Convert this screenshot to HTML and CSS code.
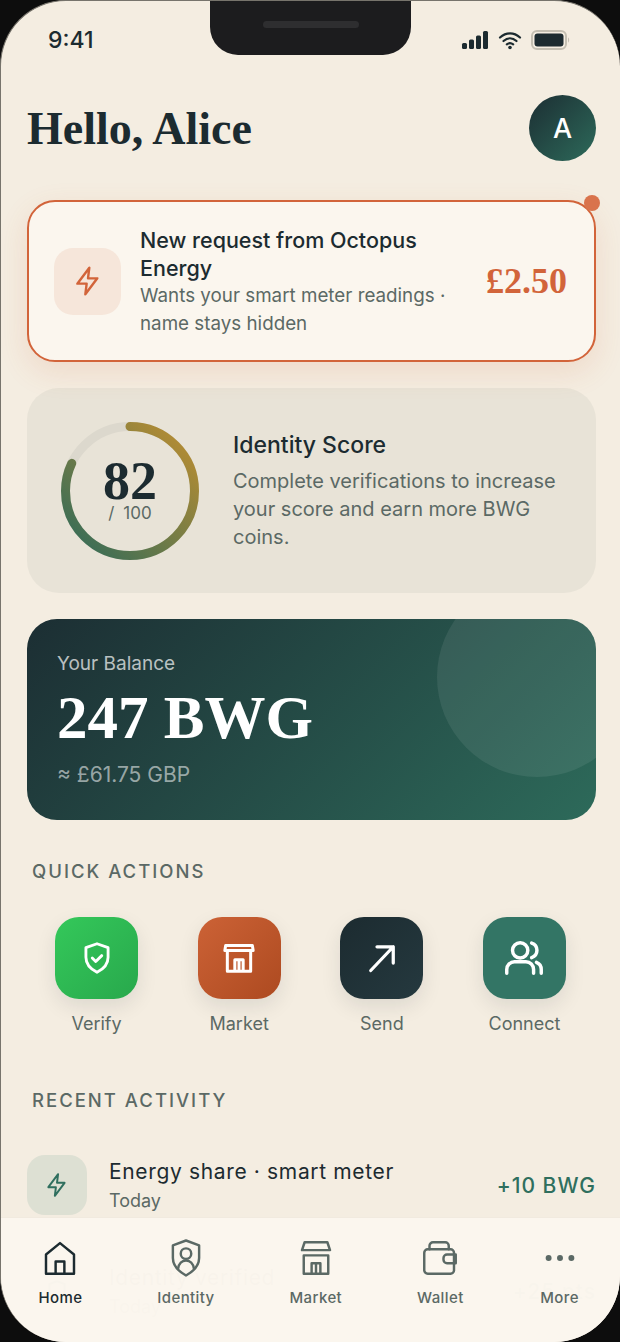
FILE: index.html
```html
<!DOCTYPE html>
<html lang="en">
    <head>
        <meta name="viewport" content="width=device-width, initial-scale=1.0">
        <title>Home</title>
        <link rel="stylesheet" href="styles.css">
    </head>
    <body>
        <div class="phone">
            <div class="notch"><span class="speaker"></span></div>

            <div class="status">
                <span class="time">9:41</span>
                <div class="status-icons">
                    <svg width="28" height="20" viewBox="0 0 28 20"><rect x="1" y="13" width="5" height="6" rx="1.5"/><rect x="8" y="9.500" width="5" height="9.500" rx="1.500"/><rect x="15" y="5.500" width="5" height="13.500" rx="1.500"/><rect x="22" y="1" width="5" height="18" rx="1.500"/></svg>
                    <svg class="wifi" width="24" height="20" viewBox="0 0 24 20"><path d="M2 7.500c6-5.500 14-5.500 20 0M5.500 11c4-3.500 9-3.500 13 0M8.800 14.300c2-1.600 4.400-1.600 6.400 0"/><circle cx="12" cy="17.500" r="1.800"/></svg>
                    <svg width="40" height="22" viewBox="0 0 40 22"><rect x="1" y="2" width="34" height="18" rx="5" class="batt-rim"/><rect x="3.500" y="4.500" width="29" height="13" rx="3"/><path d="M37 8.500c1.500.4 1.500 4.600 0 5z" class="batt-tip"/></svg>
                </div>
            </div>

            <div class="head">
                <h1>Hello, Alice</h1>
                <div class="avatar">A</div>
            </div>

            <div class="request">
                <span class="dot"></span>
                <div class="req-icon">
                    <svg width="32" height="36" viewBox="0 0 24 24"><path d="M13 2 4 14h7l-1 8 9-12h-7z"/></svg>
                </div>
                <div class="req-text">
                    <p class="req-title">New request from Octopus Energy</p>
                    <p class="req-sub">Wants your smart meter readings · name stays hidden</p>
                </div>
                <div class="req-price">£2.50</div>
            </div>

            <div class="score">
                <div class="gauge">
                    <svg width="138" height="138" viewBox="0 0 138 138">
                        <defs>
                            <linearGradient id="ring" x1="1" y1="1" x2="0" y2="0">
                                <stop offset="0" stop-color="#c08f30"/>
                                <stop offset="1" stop-color="#2d6a5a"/>
                            </linearGradient>
                        </defs>
                        <circle cx="69" cy="69" r="64.500" class="track"/>
                        <circle cx="69" cy="69" r="64.500" class="arc" stroke="url(#ring)" stroke-dasharray="332 405" transform="rotate(-90 69 69)"/>
                    </svg>
                    <div class="gauge-text">
                        <div class="gauge-num">82</div>
                        <div class="gauge-max">/ 100</div>
                    </div>
                </div>
                <div class="score-text">
                    <p class="score-title">Identity Score</p>
                    <p class="score-sub">Complete verifications to increase your score and earn more BWG coins.</p>
                </div>
            </div>

            <div class="balance">
                <span class="blob"></span>
                <p class="bal-label">Your Balance</p>
                <p class="bal-num">247 BWG</p>
                <p class="bal-gbp">≈ £61.75 GBP</p>
            </div>

            <h2 class="section">QUICK ACTIONS</h2>
            <div class="actions">
                <div class="action">
                    <div class="act-icon green">
                        <svg width="38" height="38" viewBox="0 0 24 24"><path d="M12 3 5 5.500v6c0 4.500 3 7.500 7 9.500 4-2 7-5 7-9.500v-6z"/><path d="m9 12 2.200 2.200L15 10.500"/></svg>
                    </div>
                    <span>Verify</span>
                </div>
                <div class="action">
                    <div class="act-icon orange">
                        <svg width="40" height="40" viewBox="0 0 24 24"><path d="M4 4.500h16l.5 3h-17zM5 7.500V20h14V7.500M9.500 20v-7h5v7M12 13v7"/></svg>
                    </div>
                    <span>Market</span>
                </div>
                <div class="action">
                    <div class="act-icon dark">
                        <svg class="arrow" width="30" height="30" viewBox="0 0 24 24"><path d="M3 22 21 3M8 3h13v13"/></svg>
                    </div>
                    <span>Send</span>
                </div>
                <div class="action">
                    <div class="act-icon teal">
                        <svg width="46" height="46" viewBox="0 0 24 24"><circle cx="10" cy="8" r="4"/><path d="M3 20v-2a4 4 0 0 1 4-4h6a4 4 0 0 1 4 4v2M16 4.200a4 4 0 0 1 0 7.600M21 20v-2a4 4 0 0 0-2.500-3.700"/></svg>
                    </div>
                    <span>Connect</span>
                </div>
            </div>

            <h2 class="section recent">RECENT ACTIVITY</h2>
            <div class="rows">
                <div class="row">
                    <div class="row-icon">
                        <svg width="26" height="28" viewBox="0 0 24 24"><path d="M13 2 4 14h7l-1 8 9-12h-7z"/></svg>
                    </div>
                    <div class="row-text">
                        <p class="row-title">Energy share · smart meter</p>
                        <p class="row-sub">Today</p>
                    </div>
                    <div class="row-amt">+10 BWG</div>
                </div>
                <div class="row">
                    <div class="row-icon">
                        <svg width="26" height="28" viewBox="0 0 24 24"><path d="M12 3 5 5.500v6c0 4.500 3 7.500 7 9.500 4-2 7-5 7-9.500v-6z"/></svg>
                    </div>
                    <div class="row-text">
                        <p class="row-title">Identity verified</p>
                        <p class="row-sub">Today</p>
                    </div>
                    <div class="row-amt">+25 pts</div>
                </div>
            </div>

            <div class="tabs">
                <div class="tab on">
                    <svg width="42" height="42" viewBox="0 0 24 24"><path d="M4 21V10l8-6.500L20 10v11zM9.500 21v-7h5v7"/></svg>
                    <span>Home</span>
                </div>
                <div class="tab">
                    <svg width="42" height="42" viewBox="0 0 24 24"><path d="M12 2 4.500 4.800v7.200c0 4.500 3 7.500 7.500 10 4.500-2.500 7.500-5.500 7.500-10V4.800z"/><circle cx="12" cy="9.500" r="3"/><path d="M7.500 18c.5-3 2-4.500 4.500-4.500s4 1.500 4.500 4.500"/></svg>
                    <span>Identity</span>
                </div>
                <div class="tab">
                    <svg width="42" height="42" viewBox="0 0 24 24"><path d="M5.500 3h13l1.500 4.500H4zM5 10.500h14V21H5zM9.500 21v-6h5v6M12 15v6"/></svg>
                    <span>Market</span>
                </div>
                <div class="tab">
                    <svg width="42" height="42" viewBox="0 0 24 24"><path d="M6 7V5a2 2 0 0 1 2-2h7a2 2 0 0 1 2 2v2"/><path d="M3 9a2 2 0 0 1 2-2h13a2 2 0 0 1 2 2v10a2 2 0 0 1-2 2H5a2 2 0 0 1-2-2z"/><path d="M21 10h-5a2 2 0 0 0-2 2v1a2 2 0 0 0 2 2h5z"/></svg>
                    <span>Wallet</span>
                </div>
                <div class="tab">
                    <svg width="42" height="42" viewBox="0 0 24 24"><circle cx="5.500" cy="12" r="1.700" class="fill"/><circle cx="12" cy="12" r="1.700" class="fill"/><circle cx="18.500" cy="12" r="1.700" class="fill"/></svg>
                    <span>More</span>
                </div>
            </div>
        </div>
    </body>
</html>
```

FILE: styles.css
```css
* {
    box-sizing: border-box;
}
body {
    margin: 0;
    background-color: #0d0d0d;
    font-family: "Inter", "Liberation Sans", sans-serif;
    color: #1c2b30;
}
p, h1, h2 {
    margin: 0;
}
.phone {
    position: relative;
    width: 620px;
    height: 1342px;
    overflow: hidden;
    background-color: #f4ede1;
    border-radius: 66px;
    border: 1px solid #77746c;
    border-bottom: 0;
    border-right: 0;
    padding: 0 24px 0 26px;
}
.notch {
    position: absolute;
    top: 0;
    left: 209px;
    width: 201px;
    height: 54px;
    background-color: #1c1c1e;
    border-radius: 0 0 28px 28px;
    display: flex;
    justify-content: center;
    padding-top: 20px;
}
.speaker {
    width: 96px;
    height: 7px;
    border-radius: 4px;
    background-color: #2e2e30;
}

/* status bar */
.status {
    height: 77px;
    display: flex;
    justify-content: space-between;
    align-items: center;
    padding: 0 25px 0 21px;
}
.time {
    font-size: 23px;
    font-weight: 500;
}
.status-icons {
    display: flex;
    align-items: center;
    gap: 9px;
    fill: #1c2b30;
}
.wifi path {
    fill: none;
    stroke: #1c2b30;
    stroke-width: 2.200;
    stroke-linecap: round;
}
.batt-rim {
    fill: none;
    stroke: #c4bfb2;
    stroke-width: 2;
}
.batt-tip {
    fill: #c4bfb2;
}

.head {
    display: flex;
    justify-content: space-between;
    align-items: center;
    height: 66px;
    margin-top: 17px;
}
h1 {
    font-family: "Liberation Serif", serif;
    font-size: 46px;
    font-weight: bold;
}
.avatar {
    width: 67px;
    height: 66px;
    border-radius: 50%;
    background: linear-gradient(135deg, #1c2e33, #2d6a5a);
    color: #fff;
    font-size: 27px;
    font-weight: 500;
    display: flex;
    align-items: center;
    justify-content: center;
}

/* request card */
.request {
    position: relative;
    margin-top: 39px;
    height: 162px;
    background-color: #fbf6ee;
    border: 2px solid #d2643a;
    border-radius: 28px;
    box-shadow: 0 10px 30px rgba(210, 100, 58, 0.14);
    display: flex;
    align-items: center;
    padding: 0 27px 0 25px;
}
.dot {
    position: absolute;
    top: -7px;
    right: -6px;
    width: 16px;
    height: 16px;
    border-radius: 50%;
    background-color: #d9734c;
}
.req-icon {
    width: 67px;
    height: 67px;
    flex-shrink: 0;
    border-radius: 19px;
    background-color: #f6e6da;
    display: flex;
    align-items: center;
    justify-content: center;
}
.req-icon svg, .row-icon svg {
    fill: none;
    stroke: #d2643a;
    stroke-width: 1.800;
    stroke-linejoin: round;
    stroke-linecap: round;
}
.req-text {
    flex: 1;
    margin-left: 19px;
    padding: 2px 10px 0 0;
}
.req-title {
    font-size: 21.500px;
    font-weight: 500;
    line-height: 28px;
}
.req-sub {
    font-size: 18.800px;
    line-height: 28px;
    color: #5b6965;
}
.req-price {
    font-family: "Liberation Serif", serif;
    font-size: 36px;
    font-weight: bold;
    color: #d2643a;
}

/* score */
.score {
    margin-top: 26px;
    height: 205px;
    background-color: #e8e3d7;
    border-radius: 32px;
    display: flex;
    align-items: center;
    padding: 0 34px;
    gap: 34px;
}
.gauge {
    position: relative;
    width: 138px;
    height: 138px;
    flex-shrink: 0;
}
.track, .arc {
    fill: none;
    stroke-width: 9;
}
.track {
    stroke: #dcd8cd;
}
.arc {
    stroke-linecap: round;
}
.gauge-text {
    position: absolute;
    inset: 0;
    padding-top: 2px;
    display: flex;
    flex-direction: column;
    align-items: center;
    justify-content: center;
}
.gauge-num {
    font-family: "Liberation Serif", serif;
    font-size: 54px;
    font-weight: bold;
    line-height: 42px;
}
.gauge-max {
    font-size: 17px;
    color: #5b6965;
    line-height: 22px;
    word-spacing: 4px;
}
.score-title {
    font-size: 23px;
    font-weight: 500;
    margin-bottom: 8px;
}
.score-sub {
    font-size: 20px;
    line-height: 28px;
    color: #5b6965;
}

/* balance */
.balance {
    position: relative;
    overflow: hidden;
    margin-top: 26px;
    height: 201px;
    border-radius: 30px;
    background: linear-gradient(135deg, #1c2e33, #2d6a5a);
    padding: 32px 30px;
    color: #fff;
}
.blob {
    position: absolute;
    top: -42px;
    right: -41px;
    width: 200px;
    height: 200px;
    border-radius: 50%;
    background-color: rgba(255, 255, 255, 0.08);
}
.bal-label {
    font-size: 19px;
    line-height: 26px;
    color: rgba(255, 255, 255, 0.7);
}
.bal-num {
    font-family: "Liberation Serif", serif;
    font-size: 61px;
    font-weight: bold;
    line-height: 72px;
    margin-top: 5px;
}
.bal-gbp {
    font-size: 21px;
    line-height: 28px;
    margin-top: 7px;
    color: rgba(255, 255, 255, 0.55);
}

.section {
    font-size: 18.500px;
    font-weight: 500;
    letter-spacing: 2px;
    color: #5b6965;
    padding-left: 5px;
    line-height: 26px;
    margin-top: 38px;
}
.section.recent {
    margin-top: 51px;
}

/* quick actions */
.actions {
    display: flex;
    justify-content: space-between;
    padding: 0 30px 0 28px;
    margin-top: 33px;
}
.action {
    width: 83px;
    display: flex;
    flex-direction: column;
    align-items: center;
    gap: 13px;
    font-size: 18px;
    color: #5b6965;
    line-height: 24px;
    white-space: nowrap;
}
.act-icon {
    width: 83px;
    height: 82px;
    border-radius: 24px;
    display: flex;
    align-items: center;
    justify-content: center;
    box-shadow: 0 8px 20px rgba(28, 43, 48, 0.1);
}
.act-icon svg {
    fill: none;
    stroke: #fff;
    stroke-width: 1.800;
    stroke-linecap: round;
    stroke-linejoin: round;
}
.act-icon .arrow {
    stroke-width: 2.600;
}
.green {
    background: linear-gradient(135deg, #34c85a, #28a84c);
}
.orange {
    background: linear-gradient(135deg, #cc6236, #ad4a20);
}
.dark {
    background: linear-gradient(135deg, #1c2b30, #25393f);
}
.teal {
    background-color: #337565;
}

/* activity */
.rows {
    margin-top: 42px;
    display: flex;
    flex-direction: column;
    gap: 46px;
}
.row {
    display: flex;
    align-items: center;
    height: 60px;
    gap: 22px;
}
.row-icon {
    width: 60px;
    height: 60px;
    flex-shrink: 0;
    border-radius: 18px;
    background-color: #dde0d3;
    display: flex;
    align-items: center;
    justify-content: center;
}
.row-icon svg {
    stroke: #2f6f5e;
}
.row-text {
    flex: 1;
    padding-top: 2px;
}
.row-title {
    font-size: 21px;
    line-height: 30px;
    letter-spacing: 0.650px;
}
.row-sub {
    font-size: 18px;
    line-height: 28px;
    color: #5b6965;
}
.row-amt {
    font-size: 21px;
    font-weight: 500;
    color: #2f6f5e;
    letter-spacing: 1px;
}

/* bottom tabs lie over the list */
.tabs {
    position: absolute;
    left: 0;
    right: 0;
    bottom: 0;
    height: 125px;
    background-color: rgba(251, 246, 238, 0.99);
    border-top: 1px solid #f1eadf;
    display: flex;
    justify-content: space-around;
    padding: 19px 2px 0 0;
}
.tab {
    min-width: 42px;
    display: flex;
    flex-direction: column;
    align-items: center;
    gap: 10px;
    font-size: 15px;
    line-height: 18px;
    font-weight: 500;
    letter-spacing: 0.400px;
    color: #5b6965;
}
.tab svg {
    fill: none;
    stroke: #5b6965;
    stroke-width: 1.400;
    stroke-linejoin: round;
    stroke-linecap: round;
}
.tab svg .fill {
    fill: #5b6965;
    stroke: none;
}
.tab.on {
    color: #1c2b30;
}
.tab.on svg {
    stroke: #1c2b30;
}
```
